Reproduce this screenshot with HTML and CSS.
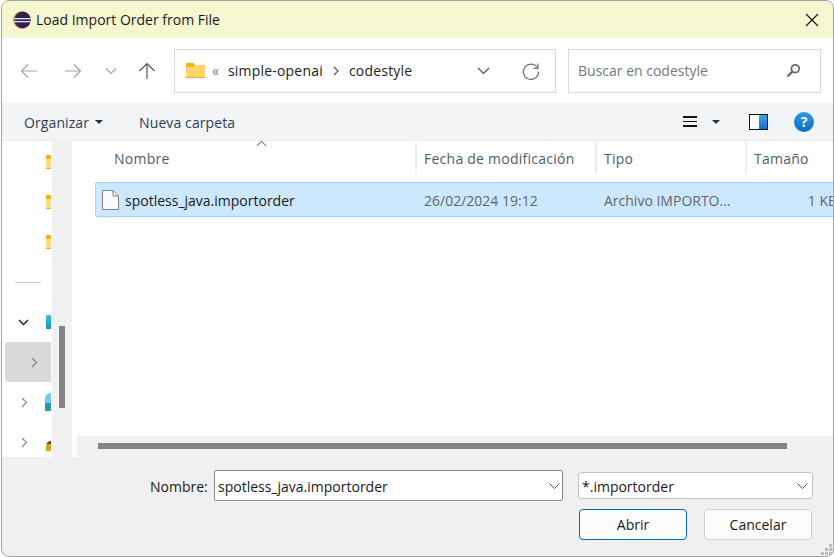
FILE: index.html
```html
<!DOCTYPE html>
<html lang="es">
<head>
<meta charset="UTF-8">
<meta name="viewport" content="width=device-width, initial-scale=1.0">
<title>Load Import Order from File</title>
<link rel="stylesheet" href="styles.css">
</head>
<body>
<div class="window">
    <header class="titlebar">
        <svg class="app-icon" width="20" height="20" viewBox="0 0 20 20">
            <circle cx="10" cy="10" r="9" fill="#e8913a"/>
            <circle cx="10.6" cy="10" r="8.2" fill="#2c2255"/>
            <rect x="2" y="8" width="17" height="1.3" fill="#e4e2ee"/>
            <rect x="2" y="11" width="17" height="1.3" fill="#e4e2ee"/>
        </svg>
        <span class="title">Load Import Order from File</span>
        <svg class="close-icon" width="14" height="14" viewBox="0 0 14 14">
            <path d="M1 1 L13 13 M13 1 L1 13" stroke="#111" stroke-width="1.1" fill="none"/>
        </svg>
    </header>

    <nav class="navbar">
        <svg class="nav-btn back" width="18" height="16" viewBox="0 0 18 16">
            <path d="M17 8 H1.5 M8 1.5 L1.5 8 L8 14.5" stroke="#a6a6a6" stroke-width="1.2" fill="none"/>
        </svg>
        <svg class="nav-btn forward" width="18" height="16" viewBox="0 0 18 16">
            <path d="M1 8 H16.5 M10 1.5 L16.5 8 L10 14.5" stroke="#a6a6a6" stroke-width="1.2" fill="none"/>
        </svg>
        <svg class="nav-btn recent" width="12" height="8" viewBox="0 0 12 8">
            <path d="M1 1.5 L6 6.5 L11 1.5" stroke="#a6a6a6" stroke-width="1.2" fill="none"/>
        </svg>
        <svg class="nav-btn up" width="18" height="18" viewBox="0 0 18 18">
            <path d="M9 17 V1.5 M1.5 9 L9 1.5 L16.5 9" stroke="#555" stroke-width="1.2" fill="none"/>
        </svg>
        <div class="address">
            <svg class="addr-folder" width="19" height="15" viewBox="0 0 19 15">
                <path d="M0 1 Q0 0 1 0 H7 L9 2 H19 V15 H0 Z" fill="#fcd56e"/>
                <path d="M0 1 Q0 0 1 0 H7 L9 2 L7 4 H0 Z" fill="#f5b21a"/>
                <rect x="0" y="14" width="19" height="1" fill="#eeb02a"/>
            </svg>
            <span class="crumb-more">«</span>
            <span class="crumb">simple-openai</span>
            <svg class="crumb-sep" width="6" height="10" viewBox="0 0 6 10">
                <path d="M1 1 L5 5 L1 9" stroke="#555" stroke-width="1.1" fill="none"/>
            </svg>
            <span class="crumb">codestyle</span>
            <svg class="addr-down" width="13" height="8" viewBox="0 0 13 8">
                <path d="M1 1 L6.5 6.5 L12 1" stroke="#555" stroke-width="1.2" fill="none"/>
            </svg>
            <svg class="addr-refresh" width="18" height="18" viewBox="0 0 18 18">
                <path d="M15.6 6 A7.6 7.6 0 1 0 16.6 9.5" stroke="#707070" stroke-width="1.2" fill="none"/>
                <path d="M16 1.5 V6.3 H11.2" stroke="#707070" stroke-width="1.2" fill="none"/>
            </svg>
        </div>
        <div class="search">
            <span class="search-text">Buscar en codestyle</span>
            <svg width="15" height="15" viewBox="0 0 15 15">
                <circle cx="9.3" cy="5.7" r="3.9" stroke="#666" stroke-width="1.7" fill="none"/>
                <path d="M6.4 8.6 L1.5 13.5" stroke="#666" stroke-width="2.2"/>
            </svg>
        </div>
    </nav>

    <div class="toolbar">
        <span class="tool organize">Organizar</span>
        <span class="caret"></span>
        <span class="tool new-folder">Nueva carpeta</span>
        <div class="tool-right">
            <div class="view-btn"><span></span><span></span><span></span></div>
            <span class="caret view-caret"></span>
            <div class="pane-icon"><i></i></div>
            <div class="help-icon">?</div>
        </div>
    </div>

    <main class="main">
        <aside class="tree">
            <div class="tree-items">
                <div class="tree-row"><span class="folder-bit"></span></div>
                <div class="tree-row"><span class="folder-bit"></span></div>
                <div class="tree-row"><span class="folder-bit"></span></div>
                <div class="tree-divider"></div>
                <div class="tree-row">
                    <svg class="chev" width="11" height="7" viewBox="0 0 11 7"><path d="M1 1 L5.5 5.5 L10 1" stroke="#222" stroke-width="1.5" fill="none"/></svg>
                    <span class="teal-bit"></span>
                </div>
                <div class="tree-row active">
                    <svg class="chev-right" width="7" height="11" viewBox="0 0 7 11"><path d="M1 1 L5.5 5.5 L1 10" stroke="#8a8a8a" stroke-width="1.3" fill="none"/></svg>
                </div>
                <div class="tree-row">
                    <svg class="chev-right" width="7" height="11" viewBox="0 0 7 11"><path d="M1 1 L5.5 5.5 L1 10" stroke="#8a8a8a" stroke-width="1.3" fill="none"/></svg>
                    <span class="globe-bit"></span>
                </div>
                <div class="tree-row">
                    <svg class="chev-right" width="7" height="11" viewBox="0 0 7 11"><path d="M1 1 L5.5 5.5 L1 10" stroke="#8a8a8a" stroke-width="1.3" fill="none"/></svg>
                    <span class="drive-bit"></span>
                </div>
            </div>
            <div class="tree-scroll"><div class="tree-thumb"></div></div>
        </aside>

        <section class="files">
            <div class="file-pane">
                <div class="col-heads">
                    <div class="col col-name">Nombre<span class="sort-up"></span></div>
                    <div class="col col-date">Fecha de modificación</div>
                    <div class="col col-type">Tipo</div>
                    <div class="col col-size">Tamaño</div>
                </div>
                <div class="file-row">
                    <div class="cell cell-name">
                        <svg width="17" height="20" viewBox="0 0 17 20">
                            <path d="M.5 .5 H11 L16.5 6 V19.5 H.5 Z" fill="#fbfbfb" stroke="#808080"/>
                            <path d="M11 .5 V6 H16.5" fill="none" stroke="#808080"/>
                        </svg>
                        <span class="file-name">spotless_java.importorder</span>
                    </div>
                    <div class="cell cell-date">26/02/2024 19:12</div>
                    <div class="cell cell-type">Archivo IMPORTO...</div>
                    <div class="cell cell-size">1 KB</div>
                </div>
            </div>
            <div class="hscroll"><div class="hthumb"></div></div>
        </section>
    </main>

    <footer class="footer">
        <div class="footer-row">
            <label class="name-label" for="fileName">Nombre:</label>
            <div class="name-box">
                <input id="fileName" class="name-input" type="text" value="spotless_java.importorder">
                <svg width="11" height="6" viewBox="0 0 11 6"><path d="M.5 .5 L5.5 5.5 L10.5 .5" stroke="#555" fill="none"/></svg>
            </div>
            <div class="filter-box">
                <span class="filter-text">*.importorder</span>
                <svg width="11" height="6" viewBox="0 0 11 6"><path d="M.5 .5 L5.5 5.5 L10.5 .5" stroke="#555" fill="none"/></svg>
            </div>
        </div>
        <div class="footer-row buttons">
            <button class="btn btn-primary" type="button">Abrir</button>
            <button class="btn" type="button">Cancelar</button>
        </div>
        <svg class="grip" width="12" height="12" viewBox="0 0 12 12" fill="#bdbdbd">
            <rect x="8" y="0" width="3" height="3"/>
            <rect x="4" y="4" width="3" height="3"/><rect x="8" y="4" width="3" height="3"/>
            <rect x="0" y="8" width="3" height="3"/><rect x="4" y="8" width="3" height="3"/><rect x="8" y="8" width="3" height="3"/>
        </svg>
    </footer>
</div>
</body>
</html>
```

FILE: styles.css
```css
* {
    box-sizing: border-box;
}

body {
    margin: 0;
    background-color: #fff;
    font-family: "Open Sans", "Noto Sans", sans-serif;
    font-size: 14px;
    color: #1a1a1a;
    overflow: hidden;
}

.window {
    width: 833px;
    height: 557px;
    margin-left: 1px;
    border: 1px solid #a3a3a3;
    border-radius: 8px;
    overflow: hidden;
    display: flex;
    flex-direction: column;
    background-color: #f0f0f0;
}

/* title bar */
.titlebar {
    height: 37px;
    flex: none;
    display: flex;
    align-items: center;
    padding: 0 14px 0 10px;
    background-color: #f4f7cf;
}

.app-icon {
    margin-right: 4px;
}

.title {
    flex: 1;
}

/* navigation */
.navbar {
    height: 65px;
    flex: none;
    display: flex;
    align-items: center;
    background-color: #fff;
}

.nav-btn {
    flex: none;
}

.back {
    margin-left: 18px;
}

.forward {
    margin-left: 26px;
}

.recent {
    margin-left: 23px;
}

.up {
    margin-left: 21px;
}

.address {
    width: 382px;
    height: 44px;
    margin-left: 18px;
    display: flex;
    align-items: center;
    border: 1px solid #d9d9d9;
    padding-left: 11px;
    color: #222;
}

.crumb-more {
    margin: 0 9px 0 7px;
    color: #777;
}

.crumb {
    letter-spacing: 0.2px;
}

.crumb-sep {
    margin: 0 10px;
}

.addr-down {
    margin-left: auto;
}

.addr-refresh {
    margin: 0 15px 0 32px;
}

.search {
    width: 253px;
    height: 44px;
    margin-left: 12px;
    display: flex;
    align-items: center;
    justify-content: space-between;
    border: 1px solid #d9d9d9;
    padding: 0 19px 0 9px;
    color: #777;
}

/* toolbar */
.toolbar {
    height: 38px;
    flex: none;
    display: flex;
    align-items: center;
    padding-left: 22px;
    background-color: #f3f4f6;
    border-bottom: 1px solid #ececec;
    color: #2d3f55;
}

.tool {
    margin-top: 2px;
    letter-spacing: 0.1px;
}

.caret {
    width: 0;
    height: 0;
    margin-left: 6px;
    border-left: 4px solid transparent;
    border-right: 4px solid transparent;
    border-top: 4px solid #1f3556;
}

.new-folder {
    margin-left: 36px;
}

.tool-right {
    margin-left: auto;
    display: flex;
    align-items: center;
    padding-right: 19px;
}

.view-btn {
    width: 14px;
    display: flex;
    flex-direction: column;
    gap: 3px;
}

.view-btn span {
    height: 1.5px;
    background-color: #111;
}

.view-caret {
    margin-left: 15px;
}

.pane-icon {
    width: 19px;
    height: 16px;
    margin-left: 29px;
    border: 1px solid #111;
    background-color: #fff;
    display: flex;
    justify-content: flex-end;
}

.pane-icon i {
    width: 8px;
    background: linear-gradient(#3aa6ea, #0f74c8);
}

.help-icon {
    width: 20px;
    height: 20px;
    margin-left: 26px;
    border-radius: 50%;
    background: linear-gradient(#2b9be8, #0b6cc2);
    color: #fff;
    font-size: 14px;
    font-weight: 700;
    line-height: 20px;
    text-align: center;
}

/* sidebar and file list */
.main {
    height: 316px;
    flex: none;
    display: flex;
    background-color: #fff;
}

.tree {
    width: 70px;
    flex: none;
    display: flex;
}

.tree-items {
    width: 50px;
    flex: none;
    padding: 1px 0 0 3px;
    overflow: hidden;
}

.tree-row {
    height: 40px;
    width: 46px;
    display: flex;
    align-items: center;
    position: relative;
}

.tree-row.active {
    background-color: #d9d9d9;
    border-radius: 4px 0 0 4px;
}

.tree-divider {
    height: 1px;
    width: 26px;
    margin: 20px 0 19px 10px;
    background-color: #cfcfcf;
}

.tree-row .chev {
    margin-left: 13px;
}

.tree-row .chev-right {
    margin-left: 16px;
}

.tree-row.active .chev-right {
    margin-left: 26px;
}

.folder-bit,
.teal-bit,
.globe-bit,
.drive-bit {
    position: absolute;
    right: 0;
    width: 5px;
}

.folder-bit {
    height: 14px;
    background: linear-gradient(#f6b21c 0 4px, #fcdc83 4px 13px, #eeb02a 13px);
}

.teal-bit {
    height: 14px;
    background: linear-gradient(#35c3d8, #1295b8);
}

.globe-bit {
    width: 6px;
    height: 18px;
    border-radius: 6px 0 0 0;
    background: linear-gradient(#78c6ec 0 10px, #2f93b8 10px);
}

.drive-bit {
    height: 10px;
    margin-top: 8px;
    border-radius: 5px 0 0 0;
    background: linear-gradient(#5a4a20 0 3px, #d9a21c 3px);
}

.tree-scroll {
    width: 20px;
    flex: none;
    background-color: #f0f0f0;
    padding: 185px 0 0 7px;
}

.tree-thumb {
    width: 6px;
    height: 82px;
    background-color: #858585;
}

.files {
    flex: 1;
    min-width: 0;
    display: flex;
    flex-direction: column;
    margin-left: 5px;
}

.file-pane {
    flex: 1;
    overflow: hidden;
}

.col-heads {
    height: 34px;
    padding-top: 1px;
    display: flex;
    color: #4d5d70;
}

.col {
    flex: none;
    height: 32px;
    display: flex;
    align-items: center;
    border-right: 2px solid #ececec;
    padding-left: 7px;
    letter-spacing: 0.25px;
    position: relative;
}

.col-name {
    width: 340px;
    padding-left: 37px;
}

.col-date {
    width: 180px;
}

.col-type {
    width: 150px;
}

.col-size {
    width: 100px;
    border-right: 0;
}

.sort-up {
    position: absolute;
    top: 0;
    left: 181px;
    width: 7px;
    height: 7px;
    border-left: 1px solid #777;
    border-top: 1px solid #777;
    transform: rotate(45deg);
}

.file-row {
    height: 35px;
    width: 800px;
    margin: 7px 0 0 18px;
    display: flex;
    align-items: center;
    background-color: #cce8ff;
    border: 1px solid #99d1ff;
    border-radius: 2px 0 0 2px;
}

.cell {
    flex: none;
    color: #666;
    padding-top: 2px;
}

.cell-name {
    width: 328px;
    padding: 0 0 0 6px;
    display: flex;
    align-items: center;
    gap: 6px;
    color: #1a1a1a;
}

.file-name {
    padding-top: 2px;
}

.cell-date {
    width: 180px;
}

.cell-type {
    width: 150px;
    white-space: nowrap;
}

.cell-size {
    width: 83px;
    text-align: right;
    white-space: nowrap;
}

.hscroll {
    height: 21px;
    flex: none;
    padding: 7px 0 0 21px;
    background-color: #f0f0f0;
}

.hthumb {
    width: 689px;
    height: 6px;
    background-color: #858585;
}

/* bottom */
.footer {
    flex: 1;
    position: relative;
    padding-top: 13px;
}

.footer-row {
    display: flex;
    align-items: center;
    height: 31px;
}

.name-label {
    margin-left: 148px;
    width: 64px;
    padding-top: 2px;
}

.name-box,
.filter-box {
    display: flex;
    align-items: center;
    justify-content: space-between;
    background-color: #fff;
}

.name-box {
    width: 349px;
    height: 31px;
    padding-right: 2px;
    border: 1px solid #8a8a8a;
    border-radius: 2px;
}

.name-input {
    flex: 1;
    min-width: 0;
    padding: 2px 0 0 3px;
    border: 0;
    outline: 0;
    font: inherit;
    color: inherit;
}

.filter-box {
    width: 235px;
    height: 27px;
    margin-left: 15px;
    padding: 0 4px 0 3px;
    border: 1px solid #c4c4c4;
    border-radius: 3px;
}

.filter-text {
    padding-top: 2px;
}

.buttons {
    justify-content: flex-end;
    gap: 17px;
    margin-top: 8px;
    padding-right: 21px;
}

.btn {
    width: 108px;
    height: 31px;
    padding: 0;
    background-color: #fdfdfd;
    border: 1px solid #d0d0d0;
    border-radius: 4px;
    font: inherit;
    color: #1a1a1a;
}

.btn-primary {
    border-color: #0067c0;
}

.grip {
    position: absolute;
    right: 0;
    bottom: 0;
}
```
